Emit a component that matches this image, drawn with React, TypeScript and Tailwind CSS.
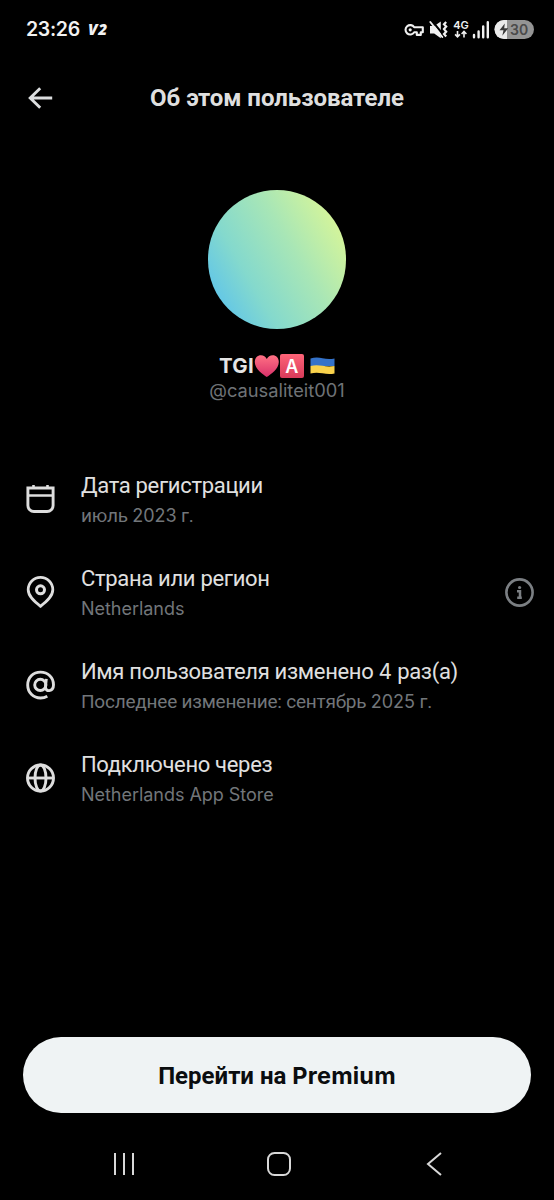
import type { FunctionComponent, ReactNode } from "react";

const StatusBar = () => (
  <div className="flex h-[58px] items-center justify-between pl-[26px] pr-[20px] font-['Inter',sans-serif]">
    <div className="flex items-center pt-[2px]">
      <span className="w-[62px] text-[19.5px] font-semibold tracking-[-0.3px] text-[#f2f2f2]">23:26</span>
      <span className="font-['Open_Sans',sans-serif] text-[15.5px] font-extrabold italic tracking-[0.6px] text-[#f2f2f2]">
        V2
      </span>
    </div>
    <svg width="130" height="24" viewBox="404 17 130 24" fill="none" className="text-[#f0f0f0]">
      {/* vpn key */}
      <path
        d="M414.2 27.3a4.7 4.7 0 1 0 0 5h2.6v2.6h4v-2.6h2v-5z"
        stroke="currentColor"
        strokeWidth="2.1"
        strokeLinejoin="round"
      />
      <circle cx="410.2" cy="29.8" r="1.6" fill="currentColor" />
      {/* muted / vibrate */}
      <path d="M430 26h4.2l6.6-4.5v16.7l-6.6-4.8H430z" fill="currentColor" />
      <path d="M431.8 20.5l12 14.8" stroke="#000" strokeWidth="2" />
      <path d="M430.3 22l12 15" stroke="currentColor" strokeWidth="1.9" strokeLinecap="round" />
      <path
        d="M446.2 22l-2.2 2.3 2.2 2.3-2.2 2.5 2.2 2.6-2.2 2.4 2.2 2.5"
        stroke="currentColor"
        strokeWidth="2.2"
      />
      {/* mobile data */}
      <text x="453.3" y="29" fontSize="11" fontWeight="600" fill="currentColor" fontFamily="Inter, sans-serif">
        4G
      </text>
      <path
        d="M457.5 31v5.8m-2.4-2.4 2.4 2.5 2.4-2.5M464 37.4v-5.8m-2.4 2.4 2.4-2.5 2.4 2.5"
        stroke="currentColor"
        strokeWidth="1.6"
      />
      {/* signal */}
      <path
        d="M474 35v2.2M478.6 31.5v5.7M483.2 26.5v10.7M487.8 22.3v14.9"
        stroke="currentColor"
        strokeWidth="2.4"
        strokeLinecap="round"
      />
      {/* battery */}
      <rect x="494.5" y="20" width="39.5" height="19" rx="9.5" fill="#949494" />
      <path d="M507 20h-3a9.5 9.5 0 0 0 0 19h3z" fill="#ececec" />
      <path d="M504.8 23.5l-5.3 6.8h4l-1.2 5.4 5.9-7.4h-4z" fill="#3b3b3b" />
      <text x="510" y="34.6" fontSize="14" fontWeight="600" fill="#4a4a4a" fontFamily="Inter, sans-serif">
        30
      </text>
    </svg>
  </div>
);

const Header = () => (
  <header className="grid h-[80px] grid-cols-[80px_1fr_80px] items-center">
    <button className="pl-[27px]">
      <svg width="26" height="24" viewBox="0 0 26 24" fill="none" stroke="#dcdedf" strokeWidth="2.9">
        <path d="M25.2 12H3M13.2 2.2 3.2 12l10 9.8" />
      </svg>
    </button>
    <h1 className="whitespace-nowrap text-center text-[24px] font-bold tracking-[-0.04px] text-[#dfdfdf]">
      Об этом пользователе
    </h1>
  </header>
);

const Profile = () => (
  <section className="flex flex-col items-center pt-[52px]">
    <div className="size-[138.5px] rounded-full bg-[linear-gradient(60deg,#5cc3ec_8%,#84d9cd_32%,#a8e6b6_60%,#e0f893_95%)]" />
    <div className="mt-[24.5px] flex h-[26px] items-center font-['Inter',sans-serif] text-[20.5px] font-bold text-[#e4e4e4]">
      <span className="tracking-[0.2px]">TGI</span>
      <svg width="25" height="24" viewBox="0 0 25 24">
        <defs>
          <linearGradient id="heart" x1="0" y1="0" x2="0" y2="1">
            <stop stopColor="#ff7184" />
            <stop offset="1" stopColor="#d9316a" />
          </linearGradient>
        </defs>
        <path
          fill="url(#heart)"
          d="M12.8 23C9 20.5.8 15 .8 8 .8 4 3.6 1.3 6.9 1.3c2.6 0 4.8 1.4 5.9 3.7 1.1-2.3 3.3-3.700 5.9-3.700 3.3 0 6.1 2.700 6.1 6.700 0 7-8.200 12.500-12 15z"
        />
      </svg>
      <span className="ml-px flex size-[24px] items-center justify-center rounded-[2px] bg-linear-to-b from-[#ff6478] to-[#d83a5a] text-[18px] font-semibold text-white">
        A
      </span>
      <svg width="25" height="20" viewBox="0 0 24 20" className="ml-[6px]">
        <path d="M0 2.6c4-1.4 8-1.2 12-.4s8 1 12 .2V10H0z" fill="#3472c9" />
        <path d="M0 10c4-1.2 8-1 12-.2s8 .9 12 .2v7.5c-4 .9-8 .6-12-.2s-8-1-12 .2z" fill="#f9d24c" />
      </svg>
    </div>
    <p className="h-[23px] font-['Inter',sans-serif] text-[18.3px] leading-[22px] text-[#6f7377]">@causaliteit001</p>
  </section>
);

interface InfoRowProps {
  icon: ReactNode;
  title: ReactNode;
  subtitle: ReactNode;
  action?: ReactNode;
}

const InfoRow: FunctionComponent<InfoRowProps> = ({ icon, title, subtitle, action }) => (
  <li className="flex h-[93px] items-center pl-[25px] pr-[19px]">
    <div className="w-[56px] text-[#dedede]">{icon}</div>
    <div className="flex-1 whitespace-nowrap pt-[3px]">
      <div className="h-[30px] text-[22px] leading-[30px] tracking-[-0.32px] text-[#e0e0e0]">{title}</div>
      <div className="h-[28px] text-[19px] leading-[29px] tracking-[-0.22px] text-[#72767a]">{subtitle}</div>
    </div>
    {action}
  </li>
);

const CalendarIcon = () => (
  <svg width="31" height="32" viewBox="0 0 31 32" fill="none" stroke="currentColor" strokeWidth="2.9">
    <path d="M2.9 5h25.2v17.5a6 6 0 0 1-6 6H8.9a6 6 0 0 1-6-6z" />
    <path d="M2.9 12.5h25.2M8.5 2v3M22.5 2v3" strokeWidth="2.6" />
  </svg>
);

const PinIcon = () => (
  <svg width="31" height="34" viewBox="0 0 31 34" fill="none" stroke="currentColor" strokeWidth="2.8">
    <path d="M15.5 31.3C10.5 27.3 3.2 21.7 3.2 14.7a12.3 12.3 0 0 1 24.6 0c0 7-7.3 12.6-12.3 16.6z" />
    <circle cx="15.5" cy="14.8" r="4" strokeWidth="3" />
  </svg>
);

const AtIcon = () => (
  <svg width="31" height="32" viewBox="0 0 31 32" fill="none" stroke="currentColor" strokeWidth="2.9">
    <circle cx="15.3" cy="15.9" r="5.6" />
    <path d="M21.3 9.8l-.8 7.7c-.4 6.2 8 5.2 8-1.7C28.5 8.5 23 3.1 15.5 3.1S2.7 8.6 2.7 16s5.5 13 12.8 13c2.6 0 4.8-.6 6.8-1.7" />
  </svg>
);

const GlobeIcon = () => (
  <svg width="31" height="32" viewBox="0 0 31 32" fill="none" stroke="currentColor" strokeWidth="2.9">
    <circle cx="15.5" cy="16" r="13" />
    <ellipse cx="15.5" cy="16" rx="5.5" ry="13" />
    <path d="M2.5 16h26" />
  </svg>
);

const InfoIcon = () => (
  <svg width="31" height="32" viewBox="0 0 31 32" fill="none" stroke="#7b7f83" strokeWidth="2.6">
    <circle cx="15.5" cy="16.5" r="13.1" />
    <path d="M13 15.2h3v6.5M13.2 21.7h4.6" strokeWidth="2.5" />
    <circle cx="15.6" cy="11.5" r="1.6" fill="#7b7f83" stroke="none" />
  </svg>
);

const NavBar = () => (
  <nav className="mt-[34px] flex h-[34px] items-center pl-[113px] text-[#d8d8d8]">
    <svg width="22" height="24" viewBox="0 0 22 24" stroke="currentColor" strokeWidth="2">
      <path d="M2 1v22M11 1v22M20 1v22" />
    </svg>
    <svg width="26" height="26" viewBox="0 0 26 26" fill="none" stroke="currentColor" strokeWidth="2" className="ml-[131px]">
      <rect x="2" y="2" width="22" height="22" rx="6.5" />
    </svg>
    <svg width="16" height="26" viewBox="0 0 16 26" fill="none" stroke="currentColor" strokeWidth="2" className="ml-[134px]">
      <path d="M15 2 2 13l13 11" />
    </svg>
  </nav>
);

const Latin: FunctionComponent<{ children: ReactNode }> = ({ children }) => (
  <span className="font-['Inter',sans-serif] text-[0.95em] tracking-[-0.05px]">{children}</span>
);

const App = () => {
  return (
    <main className="flex h-[1200px] w-[554px] flex-col overflow-hidden bg-black font-['Roboto',sans-serif]">
      <StatusBar />
      <Header />
      <Profile />
      <ul className="mt-[50px]">
        <InfoRow
          icon={<CalendarIcon />}
          title="Дата регистрации"
          subtitle={
            <>
              июль <Latin>2023</Latin> г.
            </>
          }
        />
        <InfoRow
          icon={<PinIcon />}
          title="Страна или регион"
          subtitle={<Latin>Netherlands</Latin>}
          action={<InfoIcon />}
        />
        <InfoRow
          icon={<AtIcon />}
          title={
            <>
              Имя пользователя изменено <Latin>4</Latin> раз(а)
            </>
          }
          subtitle={
            <>
              Последнее изменение: сентябрь <Latin>2025</Latin> г.
            </>
          }
        />
        <InfoRow icon={<GlobeIcon />} title="Подключено через" subtitle={<Latin>Netherlands App Store</Latin>} />
      </ul>
      <button className="mx-[23px] mt-auto h-[76px] shrink-0 rounded-full bg-[#eff3f4] pt-px text-[24px] font-bold text-[#0b0d0f]">
        Перейти на <span className="font-['Inter',sans-serif] text-[23.5px] tracking-[0.2px]">Premium</span>
      </button>
      <div className="h-[87px] shrink-0">
        <NavBar />
      </div>
    </main>
  );
};

export default App;
